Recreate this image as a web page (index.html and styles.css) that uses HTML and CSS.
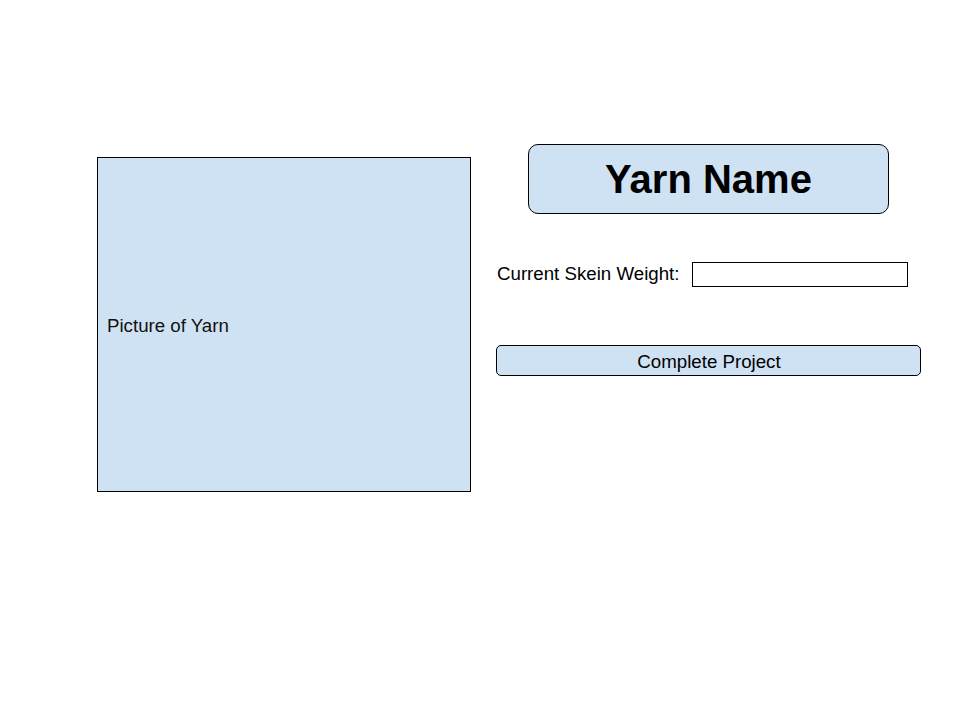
FILE: index.html
```html
<!DOCTYPE html>
<html>
<head>
<meta charset="utf-8">
<link rel="stylesheet" href="styles.css">
</head>
<body>
<div class="page">
  <div class="picture"><span>Picture of Yarn</span></div>
  <div class="details">
    <div class="title">Yarn Name</div>
    <div class="weight-row">
      <label class="weight-label">Current Skein Weight:</label>
      <div class="weight-input"></div>
    </div>
    <div class="complete-btn">Complete Project</div>
  </div>
</div>
</body>
</html>
```
FILE: styles.css
```css
html, body {
  margin: 0;
  padding: 0;
  background: #fff;
}
body {
  font-family: "Liberation Sans", Arial, sans-serif;
  color: #000;
}
.page {
  display: flex;
  align-items: flex-start;
  gap: 25px;
  padding-top: 144px;
  padding-left: 97px;
}
.picture {
  box-sizing: border-box;
  margin-top: 13px;
  width: 374px;
  height: 335px;
  background: #cfe2f3;
  border: 1px solid #000;
  display: flex;
  align-items: center;
  padding-left: 9px;
  padding-top: 2px;
  font-size: 18.7px;
  color: #111;
}
.details {
  width: 425px;
  display: flex;
  flex-direction: column;
}
.title {
  box-sizing: border-box;
  align-self: center;
  width: 361px;
  height: 70px;
  background: #cfe2f3;
  border: 1px solid #000;
  border-radius: 10px;
  display: flex;
  align-items: center;
  justify-content: center;
  font-size: 40px;
  font-weight: bold;
}
.weight-row {
  margin-top: 48px;
  display: flex;
  align-items: center;
  height: 25px;
  padding-left: 1px;
}
.weight-label {
  font-size: 18.7px;
  width: 195px;
  line-height: 1;
  margin-top: 0;
}
.weight-input {
  box-sizing: border-box;
  width: 216px;
  height: 25px;
  border: 1px solid #000;
  background: #fff;
}
.complete-btn {
  box-sizing: border-box;
  margin-top: 58px;
  width: 425px;
  height: 31px;
  background: #cfe2f3;
  border: 1px solid #000;
  border-radius: 5px;
  display: flex;
  align-items: center;
  justify-content: center;
  font-size: 18.7px;
  padding-left: 1px;
  padding-top: 2px;
}
```
